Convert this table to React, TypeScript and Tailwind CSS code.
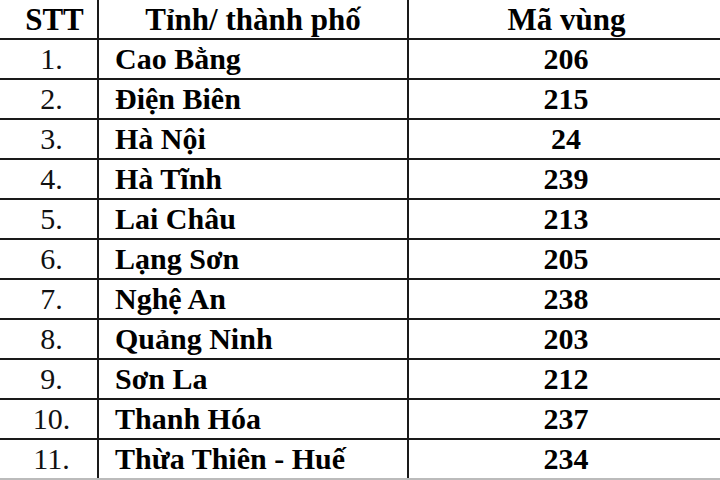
const rows = [
  { stt: '1.', name: 'Cao Bằng', code: '206' },
  { stt: '2.', name: 'Điện Biên', code: '215' },
  { stt: '3.', name: 'Hà Nội', code: '24' },
  { stt: '4.', name: 'Hà Tĩnh', code: '239' },
  { stt: '5.', name: 'Lai Châu', code: '213' },
  { stt: '6.', name: 'Lạng Sơn', code: '205' },
  { stt: '7.', name: 'Nghệ An', code: '238' },
  { stt: '8.', name: 'Quảng Ninh', code: '203' },
  { stt: '9.', name: 'Sơn La', code: '212' },
  { stt: '10.', name: 'Thanh Hóa', code: '237' },
  { stt: '11.', name: 'Thừa Thiên - Huế', code: '234' },
];

export default function App() {
  return (
    <div className="w-[720px] h-[480px] overflow-hidden bg-white text-black font-['Liberation_Serif','Times_New_Roman',serif]">
      <div className="grid grid-cols-[97px_310px_1fr] h-[40px] border-b-2 border-[#1a1a1a] text-[31px] font-bold leading-none">
        <div className="flex items-center justify-center pl-[12px]">STT</div>
        <div className="flex items-center justify-center border-l-2 border-[#1a1a1a]">Tỉnh/ thành phố</div>
        <div className="flex items-center justify-center border-l-2 border-[#1a1a1a] pl-[4px]">Mã vùng</div>
      </div>
      {rows.map((r, i) => (
        <div
          key={r.stt}
          className={`grid grid-cols-[97px_310px_1fr] h-[40px] border-b-2 text-[30px] leading-none ${
            i === rows.length - 1 ? 'border-[#bbb]' : 'border-[#1a1a1a]'
          }`}
        >
          <div className="flex items-center justify-center pl-[6px] text-[#111]">{r.stt}</div>
          <div className="flex items-center pl-[16px] border-l-2 border-[#1a1a1a] font-bold">{r.name}</div>
          <div className="flex items-center justify-center border-l-2 border-[#1a1a1a] font-bold pl-[3px]">{r.code}</div>
        </div>
      ))}
    </div>
  );
}
